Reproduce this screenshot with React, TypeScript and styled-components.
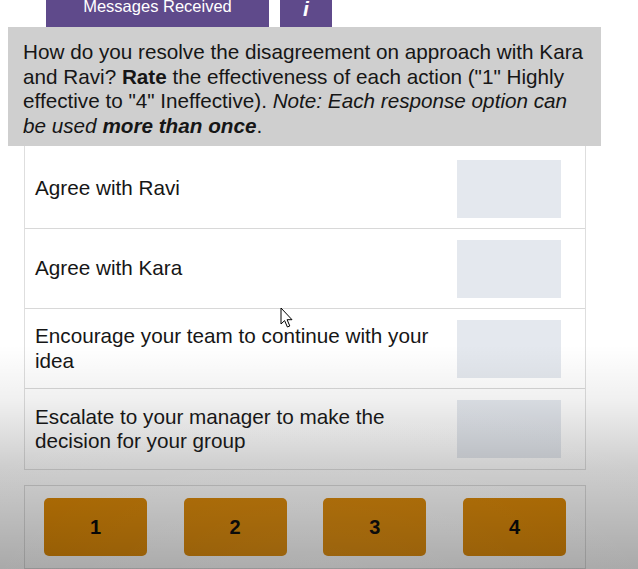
import React from "react";
import styled, { createGlobalStyle } from "styled-components";

type Item = {
  id: number;
  label: string;
};

const items: Item[] = [
  { id: 1, label: "Agree with Ravi" },
  { id: 2, label: "Agree with Kara" },
  { id: 3, label: "Encourage your team to continue with your idea" },
  { id: 4, label: "Escalate to your manager to make the decision for your group" },
];

const ratings = ["1", "2", "3", "4"];

const App = () => {
  return (
    <Page>
      <GlobalStyle />
      <TabRow>
        <Tab $width={223}>Messages Received</Tab>
        <Tab $width={52}>
          <InfoMark>i</InfoMark>
        </Tab>
      </TabRow>
      <Question>
        How do you resolve the disagreement on approach with Kara and Ravi?{" "}
        <b>Rate</b> the effectiveness of each action ("1" Highly effective to
        "4" Ineffective).{" "}
        <i>
          Note: Each response option can be used <b>more than once</b>
        </i>
        .
      </Question>
      <Card>
        {items.map((item) => (
          <Row key={item.id}>
            <RowLabel>{item.label}</RowLabel>
            <DropBox />
          </Row>
        ))}
      </Card>
      <ButtonPanel>
        {ratings.map((r) => (
          <RateButton key={r}>{r}</RateButton>
        ))}
      </ButtonPanel>
      <Cursor width="14" height="22" viewBox="0 0 14 22">
        <path
          d="M1 1 L1 17 L4.6 13.6 L7.4 20 L9.8 19 L7.1 12.7 L12 12.7 Z"
          fill="#fff"
          stroke="#000"
          strokeWidth="1"
          strokeLinejoin="round"
        />
      </Cursor>
      <Shade />
    </Page>
  );
};

const GlobalStyle = createGlobalStyle`
  html, body {
    margin: 0;
    padding: 0;
    background: #ffffff;
    overflow: hidden;
  }
  body {
    font-family: "Liberation Sans", Arial, sans-serif;
    color: #1b1b1b;
  }
`;

const Page = styled.div`
  position: relative;
  width: 638px;
  height: 569px;
  overflow: hidden;
  display: flex;
  flex-direction: column;
`;

const TabRow = styled.div`
  display: flex;
  gap: 11px;
  padding-left: 46px;
  height: 27px;
`;

const Tab = styled.div<{ $width: number }>`
  width: ${(p) => p.$width}px;
  height: 27px;
  background: #5f4a8b;
  color: #ffffff;
  font-size: 16.5px;
  line-height: 13px;
  text-align: center;
  display: flex;
  justify-content: center;
  align-items: flex-start;
`;

const InfoMark = styled.span`
  font-style: italic;
  font-weight: bold;
  font-size: 21px;
  line-height: 24px;
  margin-top: -3px;
`;

const Question = styled.div`
  width: 593px;
  height: 119px;
  box-sizing: border-box;
  margin-left: 8px;
  background: #cfcfcf;
  padding: 13px 15px 0;
  font-size: 20.7px;
  line-height: 24.5px;
  color: #161616;
`;

const Card = styled.div`
  margin: 0 52px 0 24px;
  padding-top: 3px;
  border: 1px solid #dedede;
  border-top: none;
  display: flex;
  flex-direction: column;
`;

const Row = styled.div`
  height: 80px;
  box-sizing: border-box;
  display: flex;
  align-items: center;
  justify-content: space-between;
  padding: 0 24px 0 10px;
  border-bottom: 1px solid #d8d8d8;
  &:last-child {
    border-bottom: none;
  }
`;

const RowLabel = styled.div`
  font-size: 20.7px;
  line-height: 24.5px;
  max-width: 410px;
  color: #161616;
`;

const DropBox = styled.div`
  width: 104px;
  height: 58px;
  background: #e4e8ee;
  flex-shrink: 0;
`;

const ButtonPanel = styled.div`
  margin: 15px 52px 0 24px;
  border: 1px solid #dcdcdc;
  padding: 12px 19px 12px;
  display: flex;
  justify-content: space-between;
`;

const RateButton = styled.button`
  width: 103px;
  height: 58px;
  border: none;
  border-radius: 5px;
  background: #dc8600;
  color: #000000;
  font-family: "Liberation Sans", Arial, sans-serif;
  font-weight: bold;
  font-size: 20px;
  padding: 0;
`;

const Cursor = styled.svg`
  position: absolute;
  left: 280px;
  top: 307px;
  z-index: 3;
`;

const Shade = styled.div`
  position: absolute;
  inset: 0;
  pointer-events: none;
  z-index: 2;
  background: radial-gradient(
      ellipse 70% 40% at 50% 100%,
      rgba(255, 255, 255, 0.06),
      rgba(255, 255, 255, 0) 100%
    ),
    linear-gradient(
      to bottom,
      rgba(0, 0, 0, 0) 0px,
      rgba(0, 0, 0, 0) 345px,
      rgba(0, 0, 0, 0.06) 400px,
      rgba(0, 0, 0, 0.2) 470px,
      rgba(0, 0, 0, 0.34) 569px
    );
`;

export default App;
